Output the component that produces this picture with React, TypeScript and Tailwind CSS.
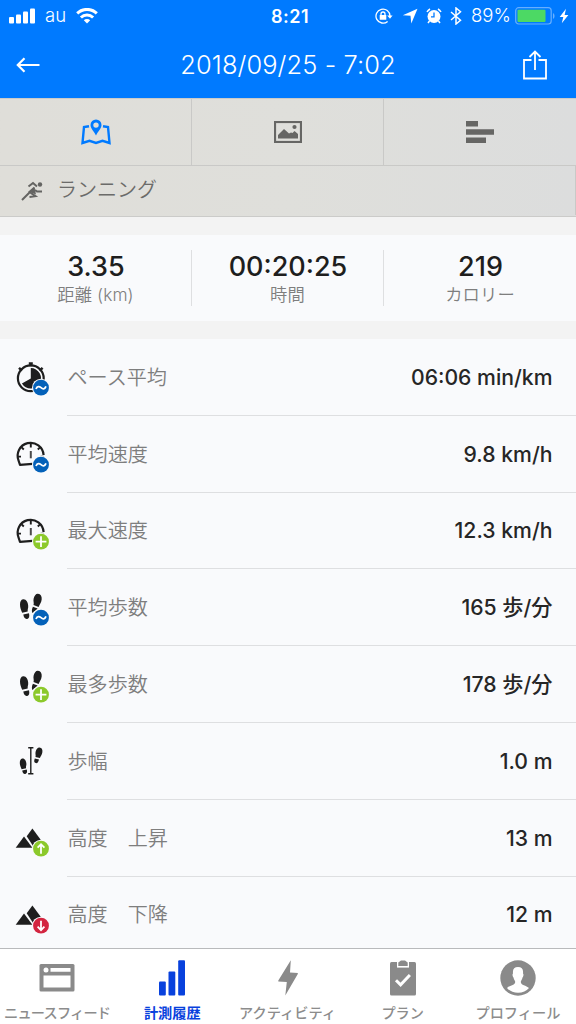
import React from "react";

type Badge = "avg" | "max" | "up" | "down";

const badgeColors: Record<Badge, string> = {
  avg: "#0461b9",
  max: "#8cc92b",
  up: "#8cc92b",
  down: "#d32540",
};

const badgePaths: Record<Badge, string> = {
  avg: "M22 30.3c1.3-3.2 3.3-2.8 5-1.3s3.7 1.9 5-1.3",
  max: "M27 23.6v10.8M21.6 29h10.8",
  up: "M27 34v-9.2M23.6 28l3.4-3.5 3.4 3.5",
  down: "M27 24v9.2M23.6 30l3.4 3.5 3.4-3.5",
};

const BadgeMark = ({ type }: { type: Badge }) => (
  <g>
    <circle cx="27" cy="28.7" r="9" fill="#f9fafc" />
    <circle cx="27" cy="28.7" r="7.9" fill={badgeColors[type]} />
    <path d={badgePaths[type]} transform="translate(0 -.3)" fill="none" stroke="#fff" strokeWidth="1.8" />
  </g>
);

const Stopwatch = () => (
  <g>
    <circle cx="16.8" cy="19.3" r="12.9" fill="none" stroke="#1e1e1e" strokeWidth="2.2" />
    <path d="M16.8 19.5V9A10.3 10.3 0 1 1 7.9 24.6Z" fill="#1e1e1e" />
    <path d="M16.8 3.2v4M14.8 4.6h4M5 8.8l3 2.8M28.6 8.8l-3 2.8" stroke="#1e1e1e" strokeWidth="2.5" />
  </g>
);

const Gauge = () => (
  <g fill="none" stroke="#1e1e1e">
    <path d="M18.5 27.8 6 28.8 4.7 25A13 13 0 1 1 29.6 19" strokeWidth="2.2" strokeLinejoin="round" />
    <path d="M16.8 7.5v4M7.6 11.3l2.2 2.2M26 11.3l-2.2 2.2M4 20.6h3M26.600 20.600h3" strokeWidth="1.9" />
    <path d="M16.8 15v7.3" stroke="#4b4b4b" strokeWidth="2" />
  </g>
);

const Steps = () => (
  <g fill="#1e1e1e">
    <path d="M9 10.2c3-.5 5 2.8 5.2 6.6.2 2.5-.8 3.5-.5 5.8l-5.5 1.2C7 21 6 18.5 6 15.5c0-2.9 1-5 3-5.3Z" />
    <path d="m9.3 25.6 5.700-1.300c.7 3.300.1 5.200-1.700 5.600-2.100.5-3.400-1-4-4.300Z" />
    <path d="M24 4.800c2.700.2 4 2.600 3.700 5.500-.3 3.200-1.900 5-3.100 7.600L19.500 16c.8-2-.5-3.700.1-6.300.7-3 2.300-5.100 4.400-4.900Z" />
    <path d="m18.900 17.700 4.700 1.900-5 4.500c-1.200-1.200-.8-4.400.3-6.400Z" />
  </g>
);

const Stride = () => (
  <g fill="#1e1e1e">
    <path d="M14.2 4.7h5.2M14.2 30.7h5.2M16.8 4.7v26" stroke="#1e1e1e" strokeWidth="1.4" />
    <path d="M8.200 15.600c2.500-.3 4 2.300 4.200 5.300.1 1.800-.7 2.600-.3 4.400l-4.500.9c-1-2.200-1.800-4-1.800-6.200 0-2.400.8-4.200 2.400-4.400Z" />
    <path d="m8.200 27.600 4.600-1c.6 2.500.2 4-1.400 4.300-1.700.4-2.800-.8-3.200-3.300Z" />
    <path d="M25.500 4.600c2.200.1 3.200 2 2.900 4.400-.3 2.500-1.600 4-2.500 6.100l-4.400-1.200c.5-1.600-.4-3 .1-5.100.6-2.500 2.100-4.300 3.900-4.200Z" />
    <path d="m20.800 15.500 4.200 1.100c-.6 2.900-1.800 3.900-3.300 3.500-1.700-.5-1.900-2-.9-4.600Z" />
  </g>
);

const Mountain = () => (
  <g fill="#1e1e1e">
    <path d="M1.7 27.8 10 16.5l8.4 11.3Z" />
    <path d="m12.700 16.300 5.700-7.900 9.600 13.200-7.800 6.200Z" />
  </g>
);

const rows: { label: string; value: string; icon: React.FC; badge?: Badge }[] = [
  { label: "ペース平均", value: "06:06 min/km", icon: Stopwatch, badge: "avg" },
  { label: "平均速度", value: "9.8 km/h", icon: Gauge, badge: "avg" },
  { label: "最大速度", value: "12.3 km/h", icon: Gauge, badge: "max" },
  { label: "平均歩数", value: "165 歩/分", icon: Steps, badge: "avg" },
  { label: "最多歩数", value: "178 歩/分", icon: Steps, badge: "max" },
  { label: "歩幅", value: "1.0 m", icon: Stride },
  { label: "高度　上昇", value: "13 m", icon: Mountain, badge: "up" },
  { label: "高度　下降", value: "12 m", icon: Mountain, badge: "down" },
];

const stats = [
  { value: "3.35", label: "距離 (km)" },
  { value: "00:20:25", label: "時間" },
  { value: "219", label: "カロリー" },
];

const StatusBar = () => (
  <div className="relative flex h-8 items-center justify-between pl-[9px] pr-[7px]">
    <div className="flex items-center">
      <svg width="26" height="16" viewBox="0 0 26 16" fill="#fff">
        <rect x="0" y="9" width="5" height="6.5" rx="1" />
        <rect x="7" y="6.5" width="5" height="9" rx="1" />
        <rect x="14" y="3.5" width="5" height="12" rx="1" />
        <rect x="21" y="0.5" width="5" height="15" rx="1" />
      </svg>
      <span className="ml-[10px] w-[21px] text-[18.5px] font-light">au</span>
      <svg className="ml-[10px]" width="22" height="16" viewBox="0 0 22 16" fill="none" stroke="#fff" strokeWidth="3">
        <path d="M1.2 5.4a14 14 0 0 1 19.6 0" />
        <path d="M4.9 9.5a8.7 8.7 0 0 1 12.2 0" />
        <path d="m11 15.5-3.2-3.2a4.6 4.6 0 0 1 6.4 0Z" fill="#fff" stroke="none" />
      </svg>
    </div>
    <span className="absolute left-[271px] text-[18px] font-semibold tracking-[0.5px]">8:21</span>
    <div className="flex items-center">
      <svg width="18" height="16" viewBox="0 0 18 16" fill="none" stroke="#fff" strokeWidth="1.3">
        <path d="M12.6 13.4A7 7 0 1 1 15 8" />
        <path d="M12.2 7.6h5.4L15 10.8Z" fill="#fff" stroke="none" />
        <rect x="4.7" y="7" width="6.6" height="4.8" rx=".5" fill="#fff" stroke="none" />
        <path d="M6 7.5V6a2 2 0 0 1 4 0v1.5" />
      </svg>
      <svg className="ml-[9px]" width="16" height="16" viewBox="0 0 16 16" fill="#fff">
        <path d="M15.5.8 9.3 15.5 8.5 7.8.8 7.200Z" />
      </svg>
      <svg className="ml-[8px]" width="16" height="16" viewBox="0 0 16 16">
        <circle cx="8" cy="8.5" r="6.5" fill="#fff" />
        <path d="M1 4A8 8 0 0 1 4 1M12 1a8 8 0 0 1 3 3M3.500 13 2 15M12.500 13l1.500 2" stroke="#fff" strokeWidth="1.5" fill="none" />
        <path d="M8 4.500v4.300H5" stroke="#007aff" strokeWidth="1.3" fill="none" />
      </svg>
      <svg className="ml-[8px]" width="12" height="18" viewBox="0 0 12 18" fill="none" stroke="#fff" strokeWidth="1.5">
        <path d="m1 5 9.500 8.200L6 17V1l4.500 3.800L1 13" />
      </svg>
      <span className="ml-[9px] w-[38px] whitespace-nowrap text-[18.5px] font-light">89%</span>
      <svg className="ml-[6px]" width="41" height="18" viewBox="0 0 41 18">
        <rect x=".7" y=".7" width="35.5" height="16.3" rx="3" fill="none" stroke="#66afff" strokeWidth="1.2" />
        <rect x="2.5" y="2.7" width="28" height="12.3" rx="1" fill="#4cd964" />
        <path d="M38 6.300c2 .5 2 5 0 5.500Z" fill="#66afff" />
      </svg>
      <svg className="ml-[3px]" width="10" height="16" viewBox="0 0 10 16" fill="#fff">
        <path d="M7 .8.700 9h3.600L2.800 15.200 9.400 7H5.600Z" />
      </svg>
    </div>
  </div>
);

const Header = () => (
  <header className="h-[98px] shrink-0 bg-[#007aff] text-white">
    <StatusBar />
    <div className="flex h-[66px] items-center justify-between pl-4 pr-[29px]">
      <svg width="24" height="16" viewBox="0 0 24 16" fill="none" stroke="#fff" strokeWidth="2.2">
        <path d="M23.500 8H2M8.500 1.200 1.800 8l6.700 6.800" />
      </svg>
      <h1 className="ml-[13px] text-[25.4px] font-light tracking-[0.1px]">2018/09/25 - 7:02</h1>
      <svg width="24" height="30" viewBox="0 0 24 30" fill="none" stroke="#fff" strokeWidth="1.8">
        <path d="M8.500 10H1v18.500h22V10h-7.500M12 20V1.500M6.500 7 12 1.500 17.500 7" />
      </svg>
    </div>
  </header>
);

const MapTabs = () => (
  <div className="h-[118.5px] shrink-0 border-y border-[#cbcbc9] bg-linear-to-r from-[#dfded9] via-[#dfdfdb] to-[#dcdddd]">
    <div className="flex h-[67px] border-b border-[#c9c9c7]">
      <div className="flex w-1/3 items-center justify-center border-r border-[#c9c9c7]">
        <svg width="30" height="26" viewBox="0 0 30 26">
          <path d="M8 7.200 3 8 1.500 24l7-2.200L15 24l6.500-2.200 7 2.200L27 8l-5-.8" fill="none" stroke="#007aff" strokeWidth="2.4" />
          <path d="M15 .4a5.500 5.500 0 0 0-5.500 5.500C9.500 9.500 13 12 15 16.600 17 12 20.500 9.500 20.500 5.900A5.500 5.500 0 0 0 15 .4Zm0 3a2.700 2.700 0 1 1 0 5.400 2.700 2.700 0 0 1 0-5.400Z" fill="#007aff" fillRule="evenodd" />
        </svg>
      </div>
      <div className="flex w-1/3 items-center justify-center border-r border-[#c9c9c7]">
        <svg width="28" height="22" viewBox="0 0 28 22" fill="#666664">
          <rect x="1" y="1" width="26" height="20" fill="none" stroke="#666664" strokeWidth="2.2" />
          <path d="M4 17.500V14l6-6 5 4.500 2-1 1.500.5 2-2 3.500 3v4.500Z" />
          <circle cx="20.5" cy="6" r="2.1" />
        </svg>
      </div>
      <div className="flex w-1/3 items-center justify-center">
        <svg width="28" height="22" viewBox="0 0 28 22" fill="#666664">
          <path d="M0 0h12v5.600H0zM0 8.200h28v5.600H0zM0 16.400h20V22H0z" />
        </svg>
      </div>
    </div>
    <div className="flex h-[49px] items-center border-r border-[#c9c9c7] pl-[21px]">
      <svg width="22" height="20" viewBox="0 0 22 20" fill="none" stroke="#646462" strokeWidth="2">
        <path d="M7.500 5.500 12 2l4 3.500" />
        <circle cx="19" cy="3.5" r="2.2" fill="#646462" stroke="none" />
        <path d="m13.500 6.500-5 4.500 6 4.200-6 .8M9 11 1 19M14 9l2 1.500h5" />
        <path d="m8.500 11 5-4.500 1.500 7Z" fill="#646462" stroke="none" />
      </svg>
      <span className="-mt-px ml-[14px] text-[20px] font-[350] text-[#6b6b69]">ランニング</span>
    </div>
  </div>
);

const NewsIcon = () => (
  <svg width="36" height="28" viewBox="0 0 36 28">
    <rect x=".5" y="0" width="35" height="27.5" rx="1.5" fill="#8a8a8a" />
    <path d="M11.500 4h20v3.700h-20zM4.500 11.500h27v12h-27z" fill="#fff" />
    <circle cx="7" cy="5.900" r="2.500" fill="#fff" />
  </svg>
);

const HistoryIcon = () => (
  <svg width="28" height="36" viewBox="0 0 28 36" fill="#0841dd">
    <rect x="1" y="21.5" width="6.8" height="14" rx="1" />
    <rect x="10.5" y="11.5" width="6.8" height="24" rx="1" />
    <rect x="20.2" y="0.3" width="6.8" height="35.2" rx="1" />
  </svg>
);

const ActivityIcon = () => (
  <svg width="20" height="36" viewBox="0 0 20 36" fill="#8a8a8a">
    <path d="M12.800.3.300 20.500v1L8.800 22 7.300 35.500 19.800 14v-1L12 12.600Z" />
  </svg>
);

const PlanIcon = () => (
  <svg width="28" height="36" viewBox="0 0 28 36">
    <rect x="1" y="2" width="26" height="33.5" rx="1.5" fill="#8a8a8a" />
    <path d="M8 2h12v5.600H8z" fill="#fff" />
    <path d="M9.300 2.500 12 .6h4l2.700 1.900V6H9.300Z" fill="#8a8a8a" />
    <path d="m7 20.200 4.600 4.600 9.300-9.800" fill="none" stroke="#fff" strokeWidth="3" />
  </svg>
);

const ProfileIcon = () => (
  <svg width="36" height="36" viewBox="0 0 36 36">
    <circle cx="18" cy="18" r="17.7" fill="#8a8a8a" />
    <path d="M18 7c3.800 0 5.500 2 5 6.400.9.800.4 3.400-.5 4-.4 2.100-1.600 3.300-1.700 4.400-.1 3.500 5.500 3.200 8.200 6.200C26.500 31.200 22.500 32.800 18 32.800S9.500 31.200 7 28c2.700-3 8.300-2.700 8.200-6.200-.1-1.100-1.300-2.300-1.700-4.400-.9-.6-1.400-3.200-.5-4C12.500 9 14.200 7 18 7Z" fill="#fff" />
  </svg>
);

const navItems = [
  { label: "ニュースフィード", icon: NewsIcon, style: "tracking-[-0.8px]" },
  { label: "計測履歴", icon: HistoryIcon, active: true },
  { label: "アクティビティ", icon: ActivityIcon },
  { label: "プラン", icon: PlanIcon },
  { label: "プロフィール", icon: ProfileIcon },
];

const App = () => {
  return (
    <div className="flex h-[1024px] w-[576px] flex-col overflow-hidden bg-[#f3f3f3] font-['Inter','Noto_Sans_CJK_JP',sans-serif]">
      <Header />
      <MapTabs />

      {/* ===== SUMMARY ===== */}
      <div className="mt-[18px] flex h-[86.5px] shrink-0 items-center bg-[#f9fafc]">
        {stats.map((stat, i) => (
          <div
            key={stat.label}
            className={`flex h-14 w-1/3 flex-col items-center ${i < 2 ? "border-r border-[#dedfe1]" : ""}`}
          >
            <span className="ml-px mt-px text-[27px] font-medium leading-[32px] text-[#1e1e1e]">{stat.value}</span>
            <span className="text-[17.3px] font-[350] leading-[24px] tracking-[0.1px] text-[#7e7e7e]">
              {stat.label}
            </span>
          </div>
        ))}
      </div>
      {/* ===== SUMMARY END ===== */}

      {/* ===== DETAILS ===== */}
      <div className="mt-[18px] min-h-0 flex-1 overflow-hidden bg-[#f9fafc]">
        {rows.map(({ label, value, icon: Icon, badge }) => (
          <div key={label} className="flex h-[76.8px] pl-[14px]">
            <svg className="mt-5 shrink-0" width="36" height="38" viewBox="0 0 36 38">
              <Icon />
              {badge && <BadgeMark type={badge} />}
            </svg>
            <div className="ml-[17px] flex flex-1 items-center justify-between border-b border-[#dedfe1] pr-[23.5px]">
              <span className="mt-[2px] pl-[0.5px] text-[20.1px] font-[350] text-[#7e7e7e]">{label}</span>
              <span className="mt-[1.5px] text-[21.2px] font-medium text-[#262626]">{value}</span>
            </div>
          </div>
        ))}
      </div>
      {/* ===== DETAILS END ===== */}

      {/* ===== BOTTOM NAV ===== */}
      <nav className="flex h-[76px] shrink-0 border-t border-[#b9babc] bg-white">
        {navItems.map(({ label, icon: Icon, active, style }) => (
          <div key={label} className="flex flex-1 basis-0 flex-col items-center">
            <div className="mt-[11px] -ml-px flex h-9 items-center">
              <Icon />
            </div>
            <span
              className={`-ml-px mt-[7px] whitespace-nowrap text-[14.2px] leading-[20px] ${style ?? ""} ${
                active ? "font-bold text-[#0841dd]" : "font-medium text-[#8c8c8c]"
              }`}
            >
              {label}
            </span>
          </div>
        ))}
      </nav>
      {/* ===== BOTTOM NAV END ===== */}
    </div>
  );
};

export default App;
